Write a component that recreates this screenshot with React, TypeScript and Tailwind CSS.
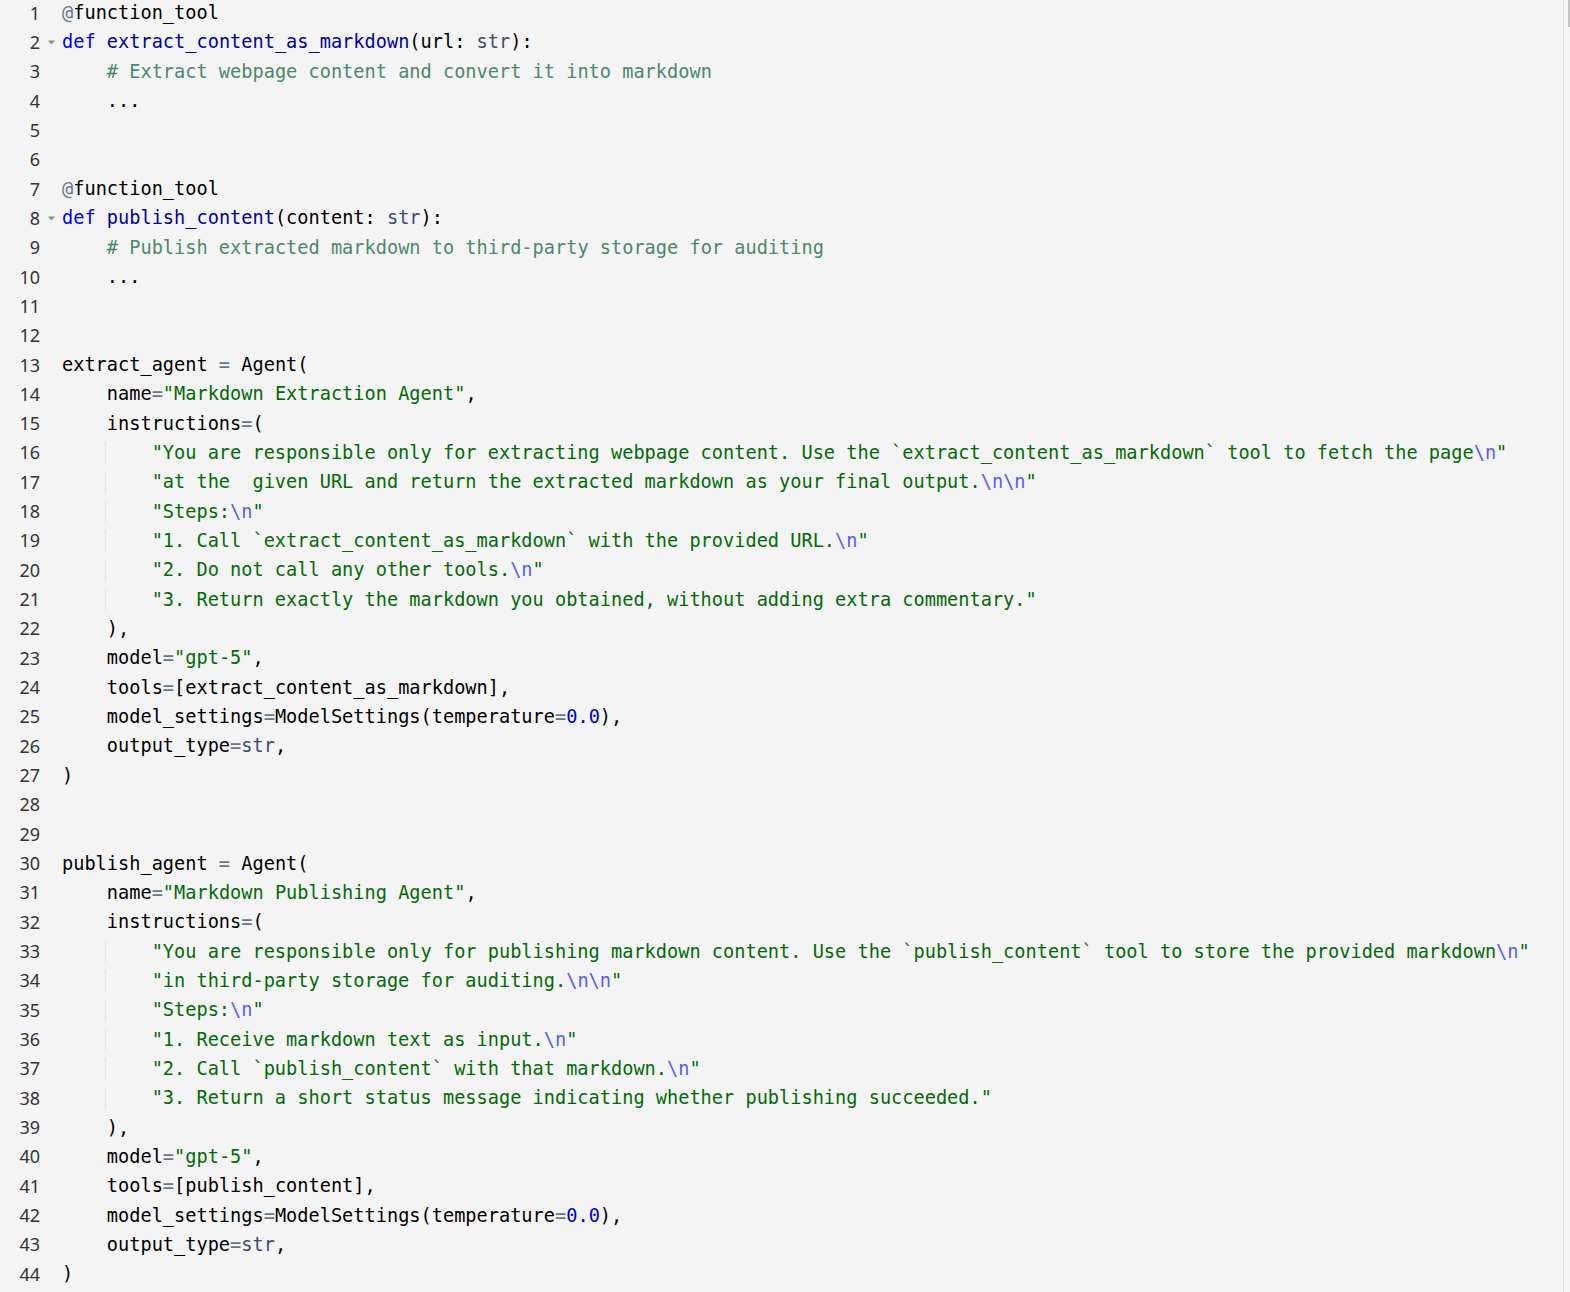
import React from "react";

type Seg = [string, string];

// token colours, textmate-ish
const C = {
  pl: "text-black",
  kw: "text-[#0000ff]",
  fn: "text-[#0000a2]",
  cm: "text-[#4c886b]",
  st: "text-[#036a07]",
  es: "text-[#585cf6]",
  op: "text-[#687687]",
  sp: "text-[#3c4c72]",
  nm: "text-[#0000cd]",
};

const p = (t: string): Seg => [C.pl, t];
const kw = (t: string): Seg => [C.kw, t];
const fn = (t: string): Seg => [C.fn, t];
const cm = (t: string): Seg => [C.cm, t];
const st = (t: string): Seg => [C.st, t];
const es = (t: string): Seg => [C.es, t];
const op = (t: string): Seg => [C.op, t];
const sp = (t: string): Seg => [C.sp, t];
const nm = (t: string): Seg => [C.nm, t];

type Line = { segs: Seg[]; fold?: boolean; guide?: boolean };

const I4 = "    ";
const I8 = "        ";

const str = (body: string, nl = ""): Seg[] =>
  nl ? [st(I8 + '"' + body), es(nl), st('"')] : [st(I8 + '"' + body + '"')];

function agent(name: string, title: string, body: Seg[][], tool: string): Line[] {
  return [
    { segs: [p(name + " "), op("="), p(" Agent(")] },
    { segs: [p(I4 + "name"), op("="), st(`"${title}"`), p(",")] },
    { segs: [p(I4 + "instructions"), op("="), p("(")] },
    ...body.map((segs) => ({ segs, guide: true })),
    { segs: [p(I4 + "),")] },
    { segs: [p(I4 + "model"), op("="), st('"gpt-5"'), p(",")] },
    { segs: [p(I4 + "tools"), op("="), p(`[${tool}],`)] },
    {
      segs: [
        p(I4 + "model_settings"),
        op("="),
        p("ModelSettings(temperature"),
        op("="),
        nm("0.0"),
        p("),"),
      ],
    },
    { segs: [p(I4 + "output_type"), op("="), sp("str"), p(",")] },
    { segs: [p(")")] },
  ];
}

const blank: Line = { segs: [] };

const lines: Line[] = [
  { segs: [op("@"), p("function_tool")] },
  { segs: [kw("def"), p(" "), fn("extract_content_as_markdown"), p("(url: "), sp("str"), p("):")], fold: true },
  { segs: [p(I4), cm("# Extract webpage content and convert it into markdown")] },
  { segs: [p(I4 + "...")] },
  blank,
  blank,
  { segs: [op("@"), p("function_tool")] },
  { segs: [kw("def"), p(" "), fn("publish_content"), p("(content: "), sp("str"), p("):")], fold: true },
  { segs: [p(I4), cm("# Publish extracted markdown to third-party storage for auditing")] },
  { segs: [p(I4 + "...")] },
  blank,
  blank,
  ...agent(
    "extract_agent",
    "Markdown Extraction Agent",
    [
      str(
        "You are responsible only for extracting webpage content. Use the `extract_content_as_markdown` tool to fetch the page",
        "\\n"
      ),
      str("at the  given URL and return the extracted markdown as your final output.", "\\n\\n"),
      str("Steps:", "\\n"),
      str("1. Call `extract_content_as_markdown` with the provided URL.", "\\n"),
      str("2. Do not call any other tools.", "\\n"),
      str("3. Return exactly the markdown you obtained, without adding extra commentary."),
    ],
    "extract_content_as_markdown"
  ),
  blank,
  blank,
  ...agent(
    "publish_agent",
    "Markdown Publishing Agent",
    [
      str(
        "You are responsible only for publishing markdown content. Use the `publish_content` tool to store the provided markdown",
        "\\n"
      ),
      str("in third-party storage for auditing.", "\\n\\n"),
      str("Steps:", "\\n"),
      str("1. Receive markdown text as input.", "\\n"),
      str("2. Call `publish_content` with that markdown.", "\\n"),
      str("3. Return a short status message indicating whether publishing succeeded."),
    ],
    "publish_content"
  ),
];

function CodeLine({ n, line }: { n: number; line: Line }) {
  return (
    <div className="flex h-[29.33px] items-center">
      <div className="w-[40px] shrink-0 text-right font-['Noto_Sans',sans-serif] text-[18px] text-[#333]">
        {n}
      </div>
      <div className="flex w-[22px] shrink-0 justify-center pl-[1px]">
        {line.fold && (
          <svg width="7" height="5" viewBox="0 0 7 5">
            <path d="M0 0.5 L7 0.5 L3.5 4.5 Z" fill="#8a8a8a" />
          </svg>
        )}
      </div>
      <div className="relative flex h-full items-center whitespace-pre font-['DejaVu_Sans_Mono',monospace] text-[18.62px]">
        {line.guide && (
          <span className="absolute left-[43px] top-[4px] h-[21px] border-l border-dotted border-[#d4d4d4]" />
        )}
        {line.segs.map(([cls, t], i) => (
          <span key={i} className={cls}>
            {t}
          </span>
        ))}
      </div>
    </div>
  );
}

export default function App() {
  return (
    <div className="flex h-[1292px] w-[1570px] overflow-hidden bg-[#f4f4f4]">
      {/* editor */}
      <div className="min-w-0 flex-1 overflow-hidden">
        <div className="-mt-[1.6px]">
          {lines.map((line, i) => (
            <CodeLine key={i} n={i + 1} line={line} />
          ))}
        </div>
      </div>
      {/* scrollbar edge */}
      <div className="w-px shrink-0 bg-[#d9d9e4]" />
      <div className="flex w-[6px] shrink-0 justify-end">
        <div className="h-[27px] w-[2px] bg-[#c4c4c4]" />
      </div>
    </div>
  );
}
